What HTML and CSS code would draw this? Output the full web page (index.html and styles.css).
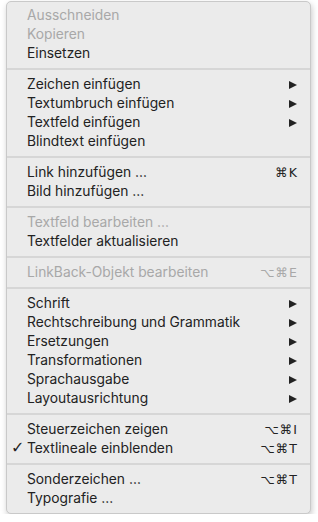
FILE: index.html
```html
<!DOCTYPE html>
<html>

<head>
	<title>Kontextmenü</title>
	<link rel="stylesheet" href="styles.css">
</head>

<body>

	<!--CONTEXT MENU-->
	<div class="menu">
		<div class="item disabled"><span class="label">Ausschneiden</span></div>
		<div class="item disabled"><span class="label">Kopieren</span></div>
		<div class="item"><span class="label">Einsetzen</span></div>
		<div class="sep"></div>
		<div class="item"><span class="label">Zeichen einfügen</span><span class="arrow"></span></div>
		<div class="item"><span class="label">Textumbruch einfügen</span><span class="arrow"></span></div>
		<div class="item"><span class="label">Textfeld einfügen</span><span class="arrow"></span></div>
		<div class="item"><span class="label">Blindtext einfügen</span></div>
		<div class="sep"></div>
		<div class="item"><span class="label">Link hinzufügen …</span><span class="key">⌘K</span></div>
		<div class="item"><span class="label">Bild hinzufügen …</span></div>
		<div class="sep"></div>
		<div class="item disabled"><span class="label">Textfeld bearbeiten …</span></div>
		<div class="item"><span class="label">Textfelder aktualisieren</span></div>
		<div class="sep"></div>
		<div class="item disabled"><span class="label">LinkBack-Objekt bearbeiten</span><span class="key">⌥⌘E</span></div>
		<div class="sep"></div>
		<div class="item"><span class="label">Schrift</span><span class="arrow"></span></div>
		<div class="item"><span class="label">Rechtschreibung und Grammatik</span><span class="arrow"></span></div>
		<div class="item"><span class="label">Ersetzungen</span><span class="arrow"></span></div>
		<div class="item"><span class="label">Transformationen</span><span class="arrow"></span></div>
		<div class="item"><span class="label">Sprachausgabe</span><span class="arrow"></span></div>
		<div class="item"><span class="label">Layoutausrichtung</span><span class="arrow"></span></div>
		<div class="sep"></div>
		<div class="item"><span class="label">Steuerzeichen zeigen</span><span class="key">⌥⌘I</span></div>
		<div class="item checked"><span class="label">Textlineale einblenden</span><span class="key">⌥⌘T</span></div>
		<div class="sep"></div>
		<div class="item"><span class="label">Sonderzeichen …</span><span class="key">⌥⌘T</span></div>
		<div class="item"><span class="label">Typografie …</span></div>
	</div>

</body>

</html>
```

FILE: styles.css
```css
body {
	margin: 0;
	background-color: #ffffff;
	font-family: Inter, "Liberation Sans", sans-serif;
	font-size: 13.8px;
	color: #222222;
}

.menu {
	margin: 1px 0 0 6px;
	width: 303px;
	padding: 4px 0 5px;
	background-color: #ebebeb;
	border: 1px solid #c9c9c9;
	border-radius: 5px;
	box-shadow: 1px 3px 6px rgba(0, 0, 0, 0.22);
}

.item {
	display: flex;
	align-items: center;
	box-sizing: border-box;
	height: 19px;
	padding: 0 12px 1px 20px;
	position: relative;
}

.label {
	flex: 1;
	white-space: nowrap;
}

.disabled {
	color: #a8a8a8;
}

.checked::before {
	content: "✓";
	position: absolute;
	left: 4px;
	top: -1px;
	font-family: "DejaVu Sans", sans-serif;
	font-size: 16px;
	font-weight: bold;
}

.key {
	font-family: "DejaVu Sans", sans-serif;
	font-size: 12.5px;
	letter-spacing: 1px;
}

.arrow {
	width: 0;
	height: 0;
	border-top: 4.5px solid transparent;
	border-bottom: 4.5px solid transparent;
	border-left: 8px solid #222222;
	margin: 1px 1px 0 0;
}

.sep {
	height: 2px;
	margin: 5px 0;
	background-color: #d6d6d6;
}
```
